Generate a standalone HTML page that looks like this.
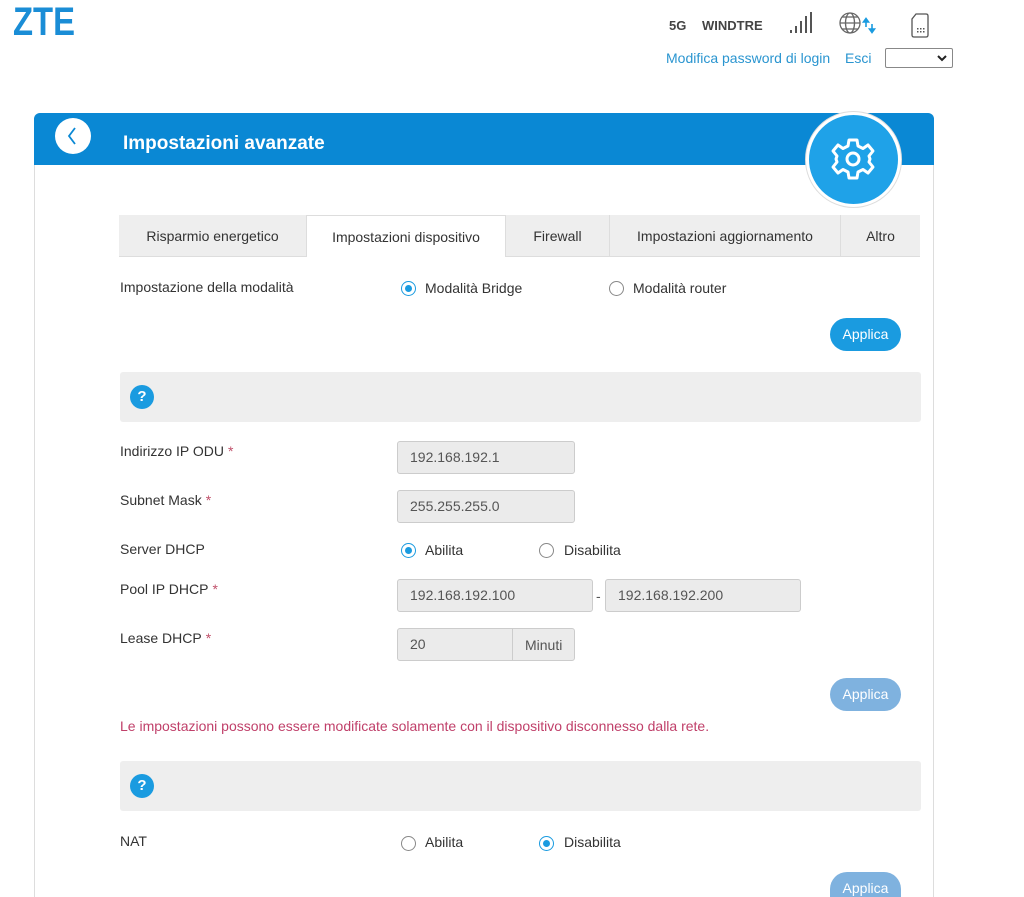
<!DOCTYPE html>
<html style="width:1024px;height:897px;overflow:hidden"><head><meta charset="utf-8"><style>
*{margin:0;padding:0;box-sizing:border-box}
body{width:1024px;height:897px;overflow:hidden;background:#fff;font-family:"Liberation Sans",sans-serif;font-size:14px;color:#333;position:relative}
.a{position:absolute}
.lbl{position:absolute;left:120px;font-size:14px;color:#333}
.star{color:#c0506a;margin-left:4px}
.inp{position:absolute;height:33px;background:#ebebeb;border:1px solid #ccc;border-radius:3px;font-size:14px;color:#555;padding-left:12px;line-height:31px}
.radio{position:absolute;width:15px;height:15px;border:1px solid #888;border-radius:50%;background:#fff}
.radio.on{border-color:#1a9be0}
.radio.on::after{content:"";position:absolute;left:3px;top:3px;width:7px;height:7px;border-radius:50%;background:#1a9be0}
.rt{position:absolute;font-size:14px;color:#333}
.btn{position:absolute;left:830px;width:71px;height:33px;border-radius:17px;color:#fff;font-size:14px;text-align:center;line-height:33px}
.gray{position:absolute;left:120px;width:801px;height:50px;background:#eee;border-radius:3px}
.q{position:absolute;left:10px;top:13px;width:24px;height:24px;border-radius:50%;background:#1a9be0;color:#fff;font-weight:bold;font-size:15px;text-align:center;line-height:24px}
.tab{position:absolute;top:215px;height:42px;line-height:42px;text-align:center;font-size:14px;color:#333;background:#eee;border-bottom:1px solid #ddd}
</style></head><body>
<div class="a" style="left:13px;top:0px;font-size:40px;font-weight:bold;color:#1a8dd6;transform:scaleX(0.82);transform-origin:left">ZTE</div>
<div class="a" style="left:669px;top:18px;font-size:13px;font-weight:bold;color:#444">5G</div>
<div class="a" style="left:702px;top:18px;font-size:13px;font-weight:bold;color:#444">WINDTRE</div>
<svg class="a" style="left:788px;top:11px" width="28" height="24"><g fill="#555"><rect x="2" y="19" width="2" height="3"/><rect x="7" y="15" width="2" height="7"/><rect x="12" y="10" width="2" height="12"/><rect x="17" y="5" width="2" height="17"/><rect x="22" y="1" width="2" height="21"/></g></svg>
<svg class="a" style="left:838px;top:11px" width="45" height="26"><g fill="none" stroke="#666" stroke-width="1.3"><circle cx="12" cy="12" r="10"/><ellipse cx="12" cy="12" rx="4.5" ry="10"/><line x1="2" y1="12" x2="22" y2="12"/><line x1="4" y1="6" x2="20" y2="6"/><line x1="4" y1="18" x2="20" y2="18"/></g><g stroke="#1a9be0" stroke-width="1.6" fill="#1a9be0"><line x1="28" y1="10" x2="28" y2="16"/><path d="M25.5 11 L28 7.5 L30.5 11Z"/><line x1="34" y1="13" x2="34" y2="19"/><path d="M31.5 18 L34 21.5 L36.5 18Z"/></g></svg>
<svg class="a" style="left:910px;top:13px" width="22" height="26"><path d="M6 1 H16 Q18 1 18 3 V22 Q18 24 16 24 H4 Q2 24 2 22 V6 Z" fill="none" stroke="#555" stroke-width="1.3"/><g fill="#555"><rect x="7" y="15" width="1.5" height="1.5"/><rect x="10" y="15" width="1.5" height="1.5"/><rect x="13" y="15" width="1.5" height="1.5"/><rect x="7" y="18" width="1.5" height="1.5"/><rect x="10" y="18" width="1.5" height="1.5"/><rect x="13" y="18" width="1.5" height="1.5"/></g></svg>
<div class="a" style="left:666px;top:50px;font-size:14px;color:#2a95d0">Modifica password di login</div>
<div class="a" style="left:845px;top:50px;font-size:14px;color:#2a95d0">Esci</div>
<div class="a" style="left:885px;top:48px;width:68px;height:20px;border:1px solid #888;border-radius:2px;background:#fff"><svg style="position:absolute;right:5px;top:6px" width="10" height="7"><path d="M1 1 L5 5 L9 1" fill="none" stroke="#222" stroke-width="2"/></svg></div>

<div class="a" style="left:34px;top:113px;width:900px;height:784px;border:1px solid #ddd;border-bottom:none;border-radius:6px 6px 0 0"></div>
<div class="a" style="left:34px;top:113px;width:900px;height:52px;background:#0a88d4;border-radius:6px 6px 0 0"></div>
<div class="a" style="left:55px;top:118px;width:36px;height:36px;border-radius:50%;background:#fff"><svg width="36" height="36"><path d="M20 10 L14 18 L20 26" fill="none" stroke="#0a88d4" stroke-width="1.8"/></svg></div>
<div class="a" style="left:123px;top:133px;font-size:19px;font-weight:bold;color:#fff">Impostazioni avanzate</div>
<div class="a" style="left:806px;top:112px;width:95px;height:95px;border-radius:50%;background:#1fa2e8;border:3px solid #fff;box-shadow:0 0 0 1px #ddd"></div>
<svg class="a" style="left:828px;top:134px" width="50" height="50" viewBox="0 0 50 50"><path d="M21 6 H29 L30 12 L35 14.5 L40 11 L45 17 L41 22 L42 25 L41 28 L45 33 L40 39 L35 35.5 L30 38 L29 44 H21 L20 38 L15 35.5 L10 39 L5 33 L9 28 L8 25 L9 22 L5 17 L10 11 L15 14.5 L20 12 Z" fill="none" stroke="#fff" stroke-width="3" stroke-linejoin="round"/><circle cx="25" cy="25" r="6" fill="none" stroke="#fff" stroke-width="3"/></svg>

<div class="tab" style="left:119px;width:187px">Risparmio energetico</div>
<div class="tab" style="left:306px;width:200px;background:#fff;border:1px solid #ddd;border-bottom:none">Impostazioni dispositivo</div>
<div class="tab" style="left:506px;width:103px">Firewall</div>
<div class="tab" style="left:609px;width:231px;border-left:1px solid #ddd">Impostazioni aggiornamento</div>
<div class="tab" style="left:840px;width:80px;border-left:1px solid #ddd">Altro</div>

<div class="lbl" style="top:279px">Impostazione della modalità</div>
<div class="radio on" style="left:401px;top:281px"></div><div class="rt" style="left:425px;top:280px">Modalità Bridge</div>
<div class="radio" style="left:609px;top:281px"></div><div class="rt" style="left:633px;top:280px">Modalità router</div>
<div class="btn" style="top:318px;background:#1a9be0">Applica</div>

<div class="gray" style="top:372px"><div class="q">?</div></div>

<div class="lbl" style="top:443px">Indirizzo IP ODU<span class="star">*</span></div>
<div class="inp" style="left:397px;top:441px;width:178px">192.168.192.1</div>
<div class="lbl" style="top:492px">Subnet Mask<span class="star">*</span></div>
<div class="inp" style="left:397px;top:490px;width:178px">255.255.255.0</div>
<div class="lbl" style="top:541px">Server DHCP</div>
<div class="radio on" style="left:401px;top:543px"></div><div class="rt" style="left:425px;top:542px">Abilita</div>
<div class="radio" style="left:539px;top:543px"></div><div class="rt" style="left:564px;top:542px">Disabilita</div>
<div class="lbl" style="top:581px">Pool IP DHCP<span class="star">*</span></div>
<div class="inp" style="left:397px;top:579px;width:196px">192.168.192.100</div>
<div class="a" style="left:596px;top:588px;color:#555">-</div>
<div class="inp" style="left:605px;top:579px;width:196px">192.168.192.200</div>
<div class="lbl" style="top:630px">Lease DHCP<span class="star">*</span></div>
<div class="inp" style="left:397px;top:628px;width:178px">20</div>
<div class="a" style="left:512px;top:629px;width:1px;height:31px;background:#ccc"></div>
<div class="a" style="left:525px;top:637px;color:#555">Minuti</div>
<div class="btn" style="top:678px;background:#7fb2df">Applica</div>
<div class="a" style="left:120px;top:718px;font-size:14px;color:#c0406a">Le impostazioni possono essere modificate solamente con il dispositivo disconnesso dalla rete.</div>

<div class="gray" style="top:761px"><div class="q">?</div></div>
<div class="lbl" style="top:833px">NAT</div>
<div class="radio" style="left:401px;top:836px"></div><div class="rt" style="left:425px;top:834px">Abilita</div>
<div class="radio on" style="left:539px;top:836px"></div><div class="rt" style="left:564px;top:834px">Disabilita</div>
<div class="btn" style="top:872px;height:25px;border-radius:17px 17px 0 0;line-height:33px;overflow:hidden;background:#7fb2df">Applica</div>
</body></html>
